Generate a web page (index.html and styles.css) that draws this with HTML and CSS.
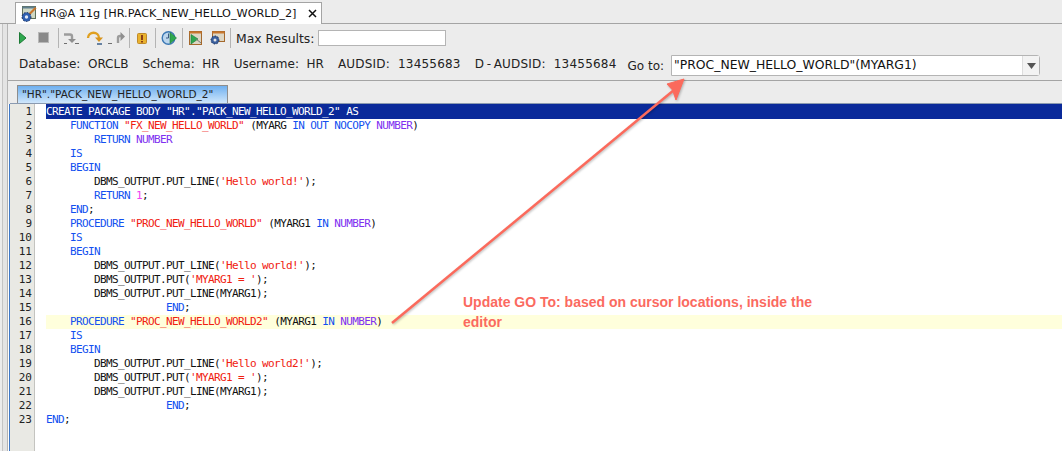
FILE: index.html
```html
<!DOCTYPE html>
<html lang="en">
<head>
<meta charset="utf-8">
<title>HR@A 11g</title>
<link rel="stylesheet" href="styles.css">
</head>
<body>
<div class="app">
  <div class="doc-tabs">
    <div class="doc-tab">
      <svg class="doc-icon" width="18" height="18" viewBox="0 0 18 18"><rect x="2.500" y="1.500" width="13" height="12" fill="#cfd8c4" stroke="#5f6f5a"/><path d="M2.500 1.500h13v2h-13z" fill="#5f7f8f"/><path d="M6 11L15 2l1.500 1.500L8 12z" fill="#c8762c"/><circle cx="6.500" cy="12" r="4.500" fill="#2f5fb0"/><circle cx="6.500" cy="12" r="4.500" fill="none" stroke="#1c2f55" stroke-dasharray="1.500 1.500"/><circle cx="6.500" cy="12" r="1.700" fill="#dfe8f5"/></svg>
      <span class="doc-title">HR@A 11g [HR.PACK_NEW_HELLO_WORLD_2]</span>
      <svg class="doc-close" width="9" height="9" viewBox="0 0 9 9"><path d="M1 1l7 7M8 1L1 8" stroke="#111" stroke-width="1.500"/></svg>
    </div>
  </div>
  <div class="panel">
    <div class="toolbar">
      <svg class="ic" width="19" height="18" viewBox="0 0 19 18"><path d="M2.500 3.500l6.500 5.500-6.500 5.500z" fill="#2fa84f" stroke="#1c7a35"/></svg>
      <svg class="ic" width="22" height="18" viewBox="0 0 22 18"><rect x="2.500" y="3.500" width="10" height="10" fill="#8a8a8a" stroke="#b8b8b8"/></svg>
      <span class="sep"></span>
      <svg class="ic" width="27" height="18" viewBox="0 0 27 18"><path d="M5 5.500h6q2 0 2 2v3" fill="none" stroke="#9c9c9c" stroke-width="2.400"/><path d="M9 10h8l-4 4z" fill="#8f8f8f"/><path d="M5 14.500h3M16 14.500h4" stroke="#6f6f6f"/></svg>
      <svg class="ic" width="22" height="18" viewBox="0 0 22 18"><path d="M2 9C2 2 13 2 13 9" fill="none" stroke="#e0a020" stroke-width="2.400"/><path d="M9 8.500h8l-4 4.500z" fill="#d8941c"/><path d="M11 15h5" stroke="#3b5f8a" stroke-width="1.500"/></svg>
      <svg class="ic" width="21" height="18" viewBox="0 0 21 18"><path d="M10 14V9q0-2 2-2h3" fill="none" stroke="#9c9c9c" stroke-width="2.400"/><path d="M12.500 3l4.500 4.500-4.500 4.500z" fill="#8f8f8f"/><path d="M0 14.500h4" stroke="#6f6f6f"/></svg>
      <span class="sep"></span>
      <svg class="ic" width="25" height="18" viewBox="0 0 25 18"><rect x="7.500" y="4.500" width="9" height="10" rx="1" fill="#e9b22e" stroke="#c08a2a"/><path d="M12 6v5M12 12v1.500" stroke="#7a2a12" stroke-width="1.700"/></svg>
      <span class="sep"></span>
      <svg class="ic" width="26" height="18" viewBox="0 0 26 18"><circle cx="12.500" cy="9" r="6.300" fill="#bcd6ee" stroke="#3c78b4" stroke-width="1.400"/><path d="M12.500 4.500V9H10" fill="none" stroke="#3c5a80"/><path d="M14 3.500l6.500 5.500-6.500 5.500z" fill="#2fa84f" stroke="#1c7a35" stroke-width=".6"/></svg>
      <span class="sep"></span>
      <svg class="ic" width="27" height="18" viewBox="0 0 27 18"><rect x="6.500" y="2.500" width="12" height="13" fill="#ddd6c4" stroke="#a4682c"/><path d="M6.500 2.500h12v2h-12z" fill="#c8762c"/><path d="M8 5.500l7 4.500-7 5z" fill="#2fa84f" stroke="#1c7a35" stroke-width=".6"/><path d="M13 10l5 4" stroke="#777"/></svg>
      <svg class="ic" width="20" height="18" viewBox="0 0 20 18"><rect x="2.500" y="2.500" width="12" height="10" fill="#ddd6c4" stroke="#a4682c"/><path d="M2.500 2.500h12v2h-12z" fill="#c8762c"/><circle cx="5" cy="11" r="4" fill="#3a5f9e"/><circle cx="5" cy="11" r="4" fill="none" stroke="#1c2f55" stroke-dasharray="1.500 1.500"/><circle cx="5" cy="11" r="1.500" fill="#e6e6e6"/></svg>
      <span class="sep"></span>
      <label class="max-label">Max Results:</label>
      <span class="max-input"></span>
    </div>
    <div class="info">
      <span>Database:&nbsp; ORCLB</span>
      <span>Schema:&nbsp; HR</span>
      <span>Username:&nbsp; HR</span>
      <span class="roomy">AUDSID:&nbsp; 13455683</span>
      <span class="roomy">D<span class="hy">-</span>AUDSID:&nbsp; 13455684</span>
      <span class="goto-label">Go to:</span>
      <div class="combo">
        <span class="combo-text">"PROC_NEW_HELLO_WORLD"(MYARG1)</span>
        <span class="combo-btn"><svg width="9" height="6" viewBox="0 0 9 6"><path d="M0 0h9L4.500 6z" fill="#555"/></svg></span>
      </div>
    </div>
  </div>
  <div class="editor-tabs">
    <div class="editor-tab">"HR"."PACK_NEW_HELLO_WORLD_2"</div>
  </div>
  <div class="editor">
    <div class="rail"></div>
    <div class="gutter">
      <div>1</div><div>2</div><div>3</div><div>4</div><div>5</div><div>6</div><div>7</div><div>8</div><div>9</div><div>10</div><div>11</div><div>12</div><div>13</div><div>14</div><div>15</div><div>16</div><div>17</div><div>18</div><div>19</div><div>20</div><div>21</div><div>22</div><div>23</div>
    </div>
    <div class="code">
<div class="line sel">CREATE PACKAGE BODY "HR"."PACK_NEW_HELLO_WORLD_2" AS</div>
<div class="line">    <b>FUNCTION</b> <i>"FX_NEW_HELLO_WORLD"</i> (MYARG <b>IN</b> <b>OUT</b> <b>NOCOPY</b> <u>NUMBER</u>)</div>
<div class="line">        <b>RETURN</b> <u>NUMBER</u></div>
<div class="line">    <b>IS</b></div>
<div class="line">    <b>BEGIN</b></div>
<div class="line">        DBMS_OUTPUT.PUT_LINE(<i>'Hello world!'</i>);</div>
<div class="line">        <b>RETURN</b> <em>1</em>;</div>
<div class="line">    <b>END</b>;</div>
<div class="line">    <b>PROCEDURE</b> <i>"PROC_NEW_HELLO_WORLD"</i> (MYARG1 <b>IN</b> <u>NUMBER</u>)</div>
<div class="line">    <b>IS</b></div>
<div class="line">    <b>BEGIN</b></div>
<div class="line">        DBMS_OUTPUT.PUT_LINE(<i>'Hello world!'</i>);</div>
<div class="line">        DBMS_OUTPUT.PUT(<i>'MYARG1 = '</i>);</div>
<div class="line">        DBMS_OUTPUT.PUT_LINE(MYARG1);</div>
<div class="line">                    <b>END</b>;</div>
<div class="line cur">    <b>PROCEDURE</b> <i>"PROC_NEW_HELLO_WORLD2"</i> (MYARG1 <b>IN</b> <u>NUMBER</u>)</div>
<div class="line">    <b>IS</b></div>
<div class="line">    <b>BEGIN</b></div>
<div class="line">        DBMS_OUTPUT.PUT_LINE(<i>'Hello world2!'</i>);</div>
<div class="line">        DBMS_OUTPUT.PUT(<i>'MYARG1 = '</i>);</div>
<div class="line">        DBMS_OUTPUT.PUT_LINE(MYARG1);</div>
<div class="line">                    <b>END</b>;</div>
<div class="line"><b>END</b>;</div>
    </div>
  </div>
  <svg class="arrow" width="1062" height="451" viewBox="0 0 1062 451">
    <path d="M392 323L674 90" stroke="#fb6a5c" stroke-width="2.500" fill="none"/>
    <path d="M684 79L667 84L672.500 90L676 100z" fill="#fb6a5c" stroke="#fb6a5c"/>
  </svg>
  <p class="note">Update GO To: based on cursor locations, inside the editor</p>
</div>
</body>
</html>
```
FILE: styles.css
```css
* { box-sizing: border-box; }
html, body { margin: 0; padding: 0; }
body { width: 1062px; height: 451px; overflow: hidden; background: #fff; font-family: "DejaVu Sans", sans-serif; }
.app { position: relative; width: 1062px; height: 451px; overflow: hidden; background: linear-gradient(90deg, #ececec 0 2px, #c4c4c4 2px 3px, #e4e4e4 3px 7px, #b4b4b4 7px 8px, #ececec 8px); }

.doc-tabs { height: 24px; background: #ececec; padding: 2px 0 0 15px; border-bottom: 1px solid #a4a4a4; }
.doc-tab { width: 307px; height: 22px; background: #fff; border: 1px solid #a4a4a4; border-bottom: 0; display: flex; align-items: center; padding-left: 4px; gap: 2px; }
.doc-icon { flex: none; }
.doc-title { font-size: 11.25px; color: #111; white-space: nowrap; }
.doc-close { flex: none; margin-left: auto; margin-right: 4px; }

.panel { height: 57px; background: #ececec; border-bottom: 1px solid #a4a4a4; padding-left: 8px; margin-left: 8px; }
.toolbar { height: 28px; display: flex; align-items: center; padding-left: 1px; }
.ic { flex: none; }
.sep { width: 1px; height: 20px; background: #b4b4b4; flex: none; }
.max-label { font-size: 12.4px; color: #222; margin-left: 5px; white-space: nowrap; }
.max-input { width: 128px; height: 16px; background: #fff; border: 1px solid #b4b4b4; margin-left: 4px; flex: none; }

.info { height: 24px; display: flex; align-items: center; gap: 14px; padding-left: 3px; font-size: 12px; color: #222; white-space: nowrap; }
.roomy { letter-spacing: .2px; }
.hy { margin: 0 2.5px; }
.goto-label { margin-left: -3px; margin-top: 3px; }
.combo { width: 369px; height: 21px; flex: none; display: flex; margin-left: -7px; margin-top: 3px; background: #fff; border: 1px solid #b4b4b4; border-radius: 0 3px 3px 0; }
.combo-text { flex: 1; padding: 1px 2px; font-size: 12.4px; color: #111; }
.combo-btn { width: 17px; background: #f3f3f3; border-left: 1px solid #ddd; display: flex; align-items: center; justify-content: center; }

.editor-tabs { height: 23px; margin-left: 10px; padding: 4px 0 0 7px; border-bottom: 1px solid #8a9ab0; background: #ececec; }
.editor-tab { width: 211px; height: 18px; border: 1px solid #8d8d8d; border-bottom: 0; background: linear-gradient(#6fb0f0, #cfe6fb); font-size: 10.5px; line-height: 16px; padding-left: 4px; color: #222; white-space: nowrap; }

.editor { display: flex; height: 347px; background: #fff; }
.rail { width: 10px; flex: none; background: linear-gradient(90deg, #ececec 0 2px, #c4c4c4 2px 3px, #e4e4e4 3px 7px, #b4b4b4 7px 8px, #fff 8px 9px, #3f78c8 9px); }
.gutter { width: 25px; flex: none; background: #e9e9e4; border-right: 1px solid #c4c4c0; font: 11px/14px "DejaVu Sans Mono", monospace; text-align: right; padding: 1px 2px 0 0; color: #222; }
.code { flex: 1; min-width: 0; padding: 1px 0 0 11px; font: 11px/14px "DejaVu Sans Mono", monospace; letter-spacing: -.62px; color: #111; }
.line { height: 14px; white-space: pre; }
.line b { font-weight: normal; color: #1250f0; }
.line i { font-style: normal; color: #f02010; }
.line u { text-decoration: none; color: #8030f0; }
.line em { font-style: normal; color: #f040f0; }
.sel { height: 15px; margin-top: -1px; padding-top: 1px; background: #0a2a9a; color: #fff; }
.cur { background: #ffffdc; }

.arrow { position: absolute; left: 0; top: 0; pointer-events: none; filter: drop-shadow(1px 1px 1px rgba(0,0,0,.25)); }
.note { position: absolute; left: 463px; top: 292px; width: 360px; margin: 0; font: bold 14px/20px "Liberation Sans", sans-serif; color: #fb6a5f; }
```
